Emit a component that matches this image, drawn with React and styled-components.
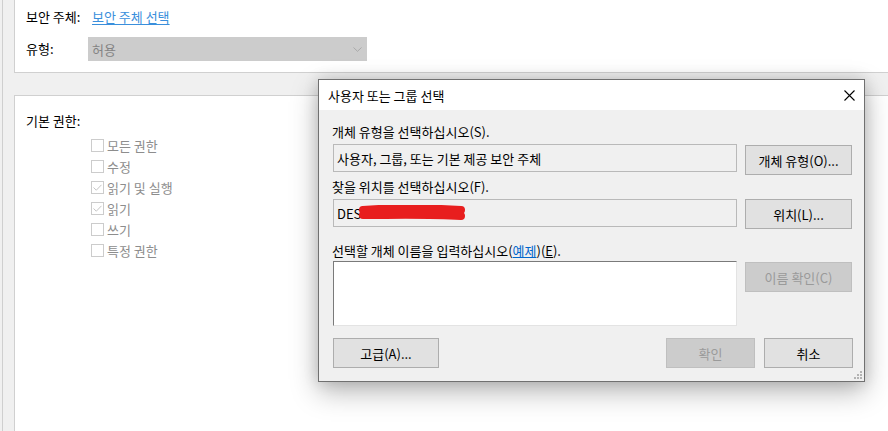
import React from 'react';
import styled, { createGlobalStyle } from 'styled-components';

const GlobalStyle = createGlobalStyle`
  html, body {
    margin: 0;
    padding: 0;
    background: #f0f0f0;
  }
  body {
    font-family: "Noto Sans CJK KR", "Noto Sans", sans-serif;
    font-size: 13px;
    color: #000;
  }
  #root {
    position: relative;
    width: 888px;
    height: 431px;
    overflow: hidden;
  }
`;

const Window = styled.div`
  height: 431px;
  padding-left: 2px;
  box-sizing: border-box;
`;

const Frame = styled.div`
  height: 100%;
  border-left: 1px solid #cfcfcf;
  padding-left: 11px;
  display: flex;
  flex-direction: column;
`;

const Panel = styled.div`
  box-sizing: border-box;
  background: #fff;
  border: 1px solid #d0d0d0;
  border-right: none;
  border-top: ${(p) => (p.$cut ? 'none' : '1px solid #d0d0d0')};
  border-bottom: ${(p) => (p.$open ? 'none' : '1px solid #d0d0d0')};
  margin-top: ${(p) => p.$gap || 0}px;
  height: ${(p) => (p.$height ? `${p.$height}px` : 'auto')};
  flex: ${(p) => (p.$open ? 1 : 'none')};
  padding: ${(p) => p.$padTop || 0}px 0 0 11px;
`;

const FieldRow = styled.div`
  display: flex;
  align-items: center;
  height: ${(p) => p.$height}px;
  margin-top: ${(p) => p.$top}px;
`;

const FieldLabel = styled.div`
  width: ${(p) => p.$width}px;
  flex: none;
  line-height: 16px;
`;

const TopLink = styled.a`
  color: #3a8fdc;
  text-decoration: underline;
  text-underline-offset: 2px;
  line-height: 16px;
  cursor: pointer;
`;

const Select = styled.div`
  width: 279px;
  height: 24px;
  background: #cccccc;
  color: #838383;
  display: flex;
  align-items: center;
  justify-content: space-between;
  padding: 0 5px 0 4px;
  box-sizing: border-box;
`;

const SectionTitle = styled.div`
  line-height: 16px;
`;

const CheckList = styled.div`
  margin: 6px 0 0 65px;
  display: flex;
  flex-direction: column;
`;

const CheckRow = styled.div`
  height: 21px;
  display: flex;
  align-items: center;
  gap: 3px;
  color: #8d8d8d;
`;

const Box = styled.span`
  width: 13px;
  height: 13px;
  box-sizing: border-box;
  border: 1px solid #cccccc;
  background: #fff;
  display: flex;
  align-items: center;
  justify-content: center;
`;

const Dialog = styled.div`
  position: absolute;
  left: 318px;
  top: 79px;
  width: 547px;
  height: 303px;
  box-sizing: border-box;
  border: 1px solid #707070;
  background: #f0f0f0;
  display: flex;
  flex-direction: column;
  box-shadow: 0 10px 26px rgba(0, 0, 0, 0.28), 0 0 14px rgba(0, 0, 0, 0.14);
`;

const TitleBar = styled.div`
  height: 30px;
  flex: none;
  background: #fff;
  display: flex;
  align-items: center;
  justify-content: space-between;
  padding: 0 9px 0 9px;
`;

const DialogBody = styled.div`
  position: relative;
  flex: 1;
  padding: 0 11px 0 14px;
  display: flex;
  flex-direction: column;
`;

const Label = styled.div`
  line-height: 16px;
  margin-top: ${(p) => p.$top}px;
  margin-left: -1px;
`;

const Section = styled.div`
  display: grid;
  grid-template-columns: 404px 107px;
  column-gap: 8px;
  align-items: start;
  margin-top: ${(p) => p.$top}px;
`;

const Field = styled.div`
  height: 28px;
  box-sizing: border-box;
  border: 1px solid #b9b9b9;
  background: #f0f0f0;
  padding-left: 3px;
  display: flex;
  align-items: center;
  white-space: nowrap;
`;

const TextArea = styled.div`
  height: 65px;
  box-sizing: border-box;
  background: #fff;
  border: 1px solid #e3e3e3;
  border-top-color: #7a7a7a;
  border-left-color: #7a7a7a;
`;

const Button = styled.button`
  width: ${(p) => p.$width || 107}px;
  height: 30px;
  margin-top: ${(p) => p.$top || 0}px;
  box-sizing: border-box;
  border: 1px solid ${(p) => (p.disabled ? '#bfbfbf' : '#adadad')};
  background: ${(p) => (p.disabled ? '#cccccc' : '#e1e1e1')};
  color: ${(p) => (p.disabled ? '#9a9a9a' : '#000')};
  font-family: inherit;
  font-size: 13px;
  padding: 0;
  flex: none;
`;

const ButtonBar = styled.div`
  display: flex;
  align-items: center;
  margin-top: 12px;
  gap: 9px;
`;

const Spacer = styled.div`
  flex: 1;
`;

const InlineLink = styled.span`
  color: #0066cc;
  text-decoration: underline;
`;

const Accel = styled.span`
  text-decoration: underline;
`;

const Grip = styled.svg`
  position: absolute;
  right: 2px;
  bottom: 2px;
`;

const perms = [
  { label: '모든 권한', checked: false },
  { label: '수정', checked: false },
  { label: '읽기 및 실행', checked: true },
  { label: '읽기', checked: true },
  { label: '쓰기', checked: false },
  { label: '특정 권한', checked: false },
];

function Check({ checked }) {
  return (
    <Box>
      {checked && (
        <svg width="9" height="7" viewBox="0 0 9 7">
          <path d="M0.5 3.5 L3.3 6.2 L8.5 0.8" fill="none" stroke="#c4c4c4" strokeWidth="1" />
        </svg>
      )}
    </Box>
  );
}

export default function App() {
  return (
    <>
      <GlobalStyle />
      <Window>
        <Frame>
          <Panel $cut $height={73} $padTop={6}>
            <FieldRow $height={22} $top={0}>
              <FieldLabel $width={66}>보안 주체:</FieldLabel>
              <TopLink>보안 주체 선택</TopLink>
            </FieldRow>
            <FieldRow $height={24} $top={9}>
              <FieldLabel $width={62}>유형:</FieldLabel>
              <Select>
                <span>허용</span>
                <svg width="9" height="5" viewBox="0 0 9 5">
                  <path d="M0.5 0.5 L4.5 4.3 L8.5 0.5" fill="none" stroke="#a9a9a9" strokeWidth="1" />
                </svg>
              </Select>
            </FieldRow>
          </Panel>
          <Panel $gap={22} $open $padTop={17}>
            <SectionTitle>기본 권한:</SectionTitle>
            <CheckList>
              {perms.map((p) => (
                <CheckRow key={p.label}>
                  <Check checked={p.checked} />
                  <span>{p.label}</span>
                </CheckRow>
              ))}
            </CheckList>
          </Panel>
        </Frame>
      </Window>

      <Dialog>
        <TitleBar>
          <span>사용자 또는 그룹 선택</span>
          <svg width="11" height="11" viewBox="0 0 11 11">
            <path d="M0.5 0.5 L10.5 10.5 M10.5 0.5 L0.5 10.5" stroke="#000" strokeWidth="1.1" />
          </svg>
        </TitleBar>
        <DialogBody>
          <Label $top={14}>개체 유형을 선택하십시오(S).</Label>
          <Section $top={4}>
            <Field>사용자, 그룹, 또는 기본 제공 보안 주체</Field>
            <Button $top={1}>개체 유형(O)...</Button>
          </Section>
          <Label $top={4}>찾을 위치를 선택하십시오(F).</Label>
          <Section $top={4}>
            <Field>
              DES
              <svg width="108" height="16" viewBox="0 0 108 16" style={{ marginLeft: -3 }}>
                <path
                  d="M5 5 C30 3 70 3 103 5 M5 10 C35 10 70 9 103 11 M8 7 L100 8"
                  fill="none"
                  stroke="#e81e1e"
                  strokeWidth="8"
                  strokeLinecap="round"
                />
              </svg>
            </Field>
            <Button>위치(L)...</Button>
          </Section>
          <Label $top={14}>
            선택할 개체 이름을 입력하십시오(<InlineLink>예제</InlineLink>)(<Accel>E</Accel>).
          </Label>
          <Section $top={2}>
            <TextArea />
            <Button $top={1} disabled>
              이름 확인(C)
            </Button>
          </Section>
          <ButtonBar>
            <Button $width={106}>고급(A)...</Button>
            <Spacer />
            <Button $width={89} disabled>
              확인
            </Button>
            <Button $width={89}>취소</Button>
          </ButtonBar>
          <Grip width="8" height="8" viewBox="0 0 8 8">
            <g fill="#b3b3b3">
              <rect x="6" y="0" width="2" height="2" />
              <rect x="3" y="3" width="2" height="2" />
              <rect x="6" y="3" width="2" height="2" />
              <rect x="0" y="6" width="2" height="2" />
              <rect x="3" y="6" width="2" height="2" />
              <rect x="6" y="6" width="2" height="2" />
            </g>
          </Grip>
        </DialogBody>
      </Dialog>
    </>
  );
}
